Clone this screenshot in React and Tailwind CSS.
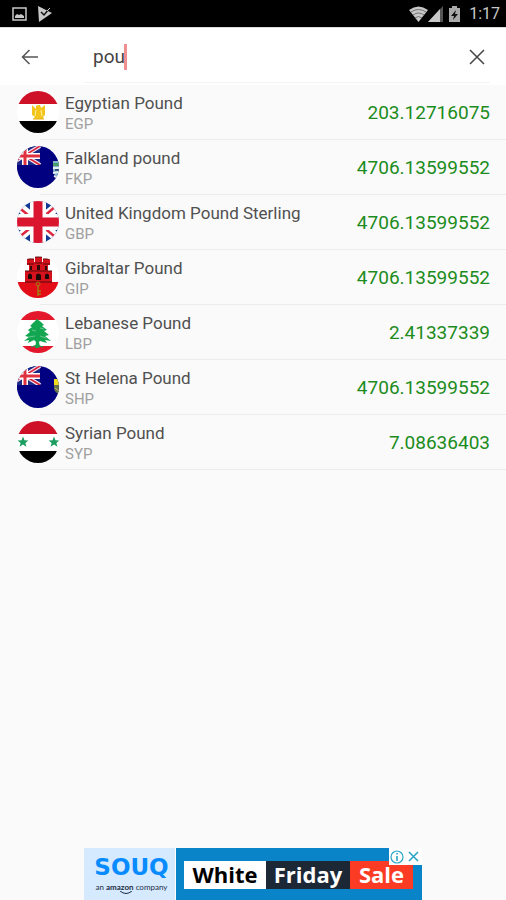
import React, { useState } from 'react';

const UnionCanton = () => (
  <g>
    <rect x="0" y="0" width="23" height="19" fill="#1b2a86" />
    <path d="M-8 0L23 19M23 0L-8 19" stroke="#f2dfe8" strokeWidth="4" />
    <path d="M-8 0L23 19M23 0L-8 19" stroke="#d8203a" strokeWidth="1.5" />
    <path d="M8 0V19M0 10H23" stroke="#fff" strokeWidth="6" />
    <path d="M8 0V19M0 10H23" stroke="#e0303f" strokeWidth="3" />
    <path d="M23 0V24H0V19H23z" fill="#000080" />
  </g>
);

const Star = ({ x }) => (
  <path
    transform={`translate(${x} 21)`}
    d="M0-5.5L1.5-1.8L5.4-1.6L2.4.9L3.4 4.7L0 2.6L-3.4 4.7L-2.4.9L-5.4-1.6L-1.5-1.8Z"
    fill="#1b9e5f"
  />
);

const flags = {
  EGP: (
    <>
      <rect width="42" height="42" fill="#fff" />
      <rect width="42" height="13" fill="#ce1126" />
      <rect y="30" width="42" height="12" fill="#000" />
      <path
        d="M19 15l2-1h2l1 3 4-3v10l-2 2 1 2H16l2-2-3-2V14l4 4z"
        fill="#f3c51c"
      />
      <path d="M19 19l-1 6M24 19l1 6" stroke="#fff0a8" strokeWidth="1" />
      <path d="M16 28h11" stroke="#e5b01a" strokeWidth="1" />
    </>
  ),
  FKP: (
    <>
      <rect width="42" height="42" fill="#000080" />
      <UnionCanton />
      <path d="M36 15h6v17q-6-3-6-8z" fill="#7fb4cf" />
      <path d="M36 17h6v3h-6z" fill="#4d9b68" />
      <path d="M36 22h6M36 27l6-1M37 30l5 2" stroke="#e8eef2" strokeWidth="2" />
      <path d="M38 24h4" stroke="#334f7c" strokeWidth="2" />
    </>
  ),
  GBP: (
    <>
      <rect width="42" height="42" fill="#123a94" />
      <path d="M-6-1L48 43M48-1L-6 43" stroke="#fff" strokeWidth="9" />
      <path d="M-6 0L17 19M48 44L25 25M47-2L25 17M-5 42L17 24" stroke="#dc2740" strokeWidth="2.5" />
      <path d="M21 0V42M0 21H42" stroke="#fff" strokeWidth="16" />
      <path d="M21 0V42M0 21H42" stroke="#d9152f" strokeWidth="9" />
    </>
  ),
  GIP: (
    <>
      <rect width="42" height="42" fill="#fff" />
      <rect y="26" width="42" height="16" fill="#e30d17" />
      <path
        d="M10 3h7v3h1V1h7v5h1V3h7v6h-2v6h4v12H8V15h4V9h-2z"
        fill="#d5121b"
      />
      <path
        d="M10 3h7M18 1h7M26 3h7M10 8h7M18 7h7M26 8h7M8 15h27M8 26h27"
        stroke="#5a080b"
        strokeWidth="1"
      />
      <path d="M11 23v-4q2-3 4 0v4zM19 24v-5q2-3 5 0v5zM28 23v-4q2-3 4 0v4z" fill="#1f0808" />
      <path d="M13 10h2v4h-2zM20 9h3v5h-3zM28 10h2v4h-2z" fill="#31090b" />
      <path d="M21 29v11M21 35h3M21 38h3" stroke="#a57a15" strokeWidth="1.5" fill="none" />
      <circle cx="21" cy="28" r="2" fill="none" stroke="#a57a15" />
    </>
  ),
  LBP: (
    <>
      <rect width="42" height="42" fill="#fff" />
      <rect width="42" height="9" fill="#e4182c" />
      <rect y="35" width="42" height="7" fill="#e4182c" />
      <path
        d="M20 8l4 3 3 3-2 1 5 4-3 1 5 4-4 1 6 5-6-1 2 3-7-2-1 1 1 5-2 1h-3l1-6-2-2-6 3 1-3-5 1 5-4-4-1 5-4-2-2 4-3-2-1 4-4z"
        fill="#12a650"
      />
      <path d="M15 19l4 1M23 17l4 1M12 26l6-1M23 25l6 2" stroke="#65c68c" strokeWidth="1" />
      <path d="M14 36l6-2 6 2" stroke="#12a650" strokeWidth="1" fill="none" />
    </>
  ),
  SHP: (
    <>
      <rect width="42" height="42" fill="#000080" />
      <UnionCanton />
      <path d="M37 13h5v6h-5z" fill="#f2dc20" />
      <path d="M37 19h5v9q-5-2-5-6z" fill="#66724a" />
      <path d="M38 22l4 3" stroke="#d0c66d" strokeWidth="1" />
    </>
  ),
  SYP: (
    <>
      <rect width="42" height="42" fill="#fff" />
      <rect width="42" height="13" fill="#ce1126" />
      <rect y="30" width="42" height="12" fill="#000" />
      <Star x="6" />
      <Star x="37" />
    </>
  ),
};

const currencies = [
  { code: 'EGP', name: 'Egyptian Pound', value: '203.12716075' },
  { code: 'FKP', name: 'Falkland pound', value: '4706.13599552' },
  { code: 'GBP', name: 'United Kingdom Pound Sterling', value: '4706.13599552' },
  { code: 'GIP', name: 'Gibraltar Pound', value: '4706.13599552' },
  { code: 'LBP', name: 'Lebanese Pound', value: '2.41337339' },
  { code: 'SHP', name: 'St Helena Pound', value: '4706.13599552' },
  { code: 'SYP', name: 'Syrian Pound', value: '7.08636403' },
];

const StatusBar = () => (
  <div className="flex h-[27px] shrink-0 items-center justify-between bg-black pl-3 pr-1.5 text-[#c8c8c8]">
    <div className="flex items-center gap-2.5">
      <svg width="15" height="14" viewBox="0 0 15 14" aria-hidden="true">
        <rect x="1" y="1" width="13" height="12" fill="none" stroke="currentColor" strokeWidth="1.5" />
        <path d="M3 11V9l2-2 2 1 2-1 3 2v2z" fill="currentColor" />
      </svg>
      <svg width="16" height="16" viewBox="0 0 16 16" aria-hidden="true">
        <path d="M1 0L15 7L2 16z" fill="currentColor" />
        <path d="M4 6l3 3 5-6" fill="none" stroke="#111" strokeWidth="1.5" />
        <path d="M10 5l3-3" stroke="currentColor" strokeWidth="1" />
      </svg>
    </div>
    <div className="flex items-center gap-1">
      <div className="flex items-center">
        <svg width="19" height="16" viewBox="0 0 19 16" aria-hidden="true">
          <path d="M0 4Q9.500-3 19 4L9.500 16z" fill="currentColor" />
          <path d="M2 6q7.500-5 15 0M4 9q5.500-4 11 0M6 12q3.500-3 7 0" fill="none" stroke="#555" strokeWidth="0.8" />
        </svg>
        <svg width="16" height="16" viewBox="0 0 16 16" aria-hidden="true">
          <path d="M15 0v16H0z" fill="#555" />
          <path d="M12 3v13H0z" fill="currentColor" />
        </svg>
      </div>
      <svg width="13" height="16" viewBox="0 0 13 16" className="mr-1" aria-hidden="true">
        <path d="M4 0h5v2h3v14H1V2h3z" fill="#aaa" />
        <path d="M8 4L3 10h3l-1 4 5-6H7z" fill="#111" />
      </svg>
      <span className="text-base leading-5">1:17</span>
    </div>
  </div>
);

const SearchBar = ({ query, onChange }) => (
  <header className="flex h-[58px] shrink-0 items-center border-t border-[#ddd] bg-white pl-5 pr-4">
    <button type="button" aria-label="Back" className="flex h-8 w-5 items-center justify-center">
      <svg width="18" height="16" viewBox="0 0 18 16" fill="none" stroke="#555" strokeWidth="1.500" aria-hidden="true">
        <path d="M17 8H1.500M8.500 1L1.500 8l7 7" />
      </svg>
    </button>
    <div className="ml-11 flex h-full flex-1 items-end pb-0.5">
      <label className="flex h-full flex-1 items-center border-b border-[#f3f3f3] pt-1 pl-[9px]">
        <input
          type="text"
          aria-label="Search currency"
          value={query}
          onChange={(e) => onChange(e.target.value)}
          className="field-sizing-content bg-transparent text-[19px] leading-6 text-[#444] outline-none"
        />
        <span className="-ml-px h-[26px] w-[3px] bg-[#ef8f8f]" />
      </label>
      <div className="flex h-full items-center border-b border-[#f3f3f3] pt-1">
        <button
          type="button"
          aria-label="Clear"
          onClick={() => onChange('')}
          className="flex h-8 w-[26px] items-center justify-center"
        >
          <svg width="16" height="16" viewBox="0 0 16 16" stroke="#444" strokeWidth="1.500" aria-hidden="true">
            <path d="M1 1l14 14M15 1L1 15" />
          </svg>
        </button>
      </div>
    </div>
  </header>
);

const CurrencyRow = ({ currency }) => (
  <li className="h-[55px] pl-10">
    <div className="flex h-full items-center border-b border-[#ececec] pr-4">
      <svg width="42" height="42" viewBox="0 0 42 42" className="-ml-[23px] shrink-0 rounded-full" aria-hidden="true">
        {flags[currency.code]}
      </svg>
      <div className="flex-1 pt-0.5 pl-1.5">
        <div className="text-[17px] leading-[22px] text-[#505050]">{currency.name}</div>
        <div className="text-[15px] leading-5 text-[#a0a0a0]">{currency.code}</div>
      </div>
      <div className="pt-0.5 text-[19px] leading-6 text-[#1c8c1c]">{currency.value}</div>
    </div>
  </li>
);

const AdBanner = () => (
  <a href="#sale" className="relative mx-auto flex h-[52px] w-[338px] shrink-0 bg-[#0a84c9]">
    <div className="flex w-[92px] flex-col items-center border-r border-white bg-[#d5eaff] pt-1 pl-1">
      <div className="font-['DejaVu_Sans'] text-[23px] leading-[30px] font-bold text-[#078bff]">SOUQ</div>
      <div className="font-[Lato] text-[8px] leading-[10px] whitespace-nowrap text-[#1c2c45]">
        an <b>amazon</b> company
      </div>
      <svg width="14" height="4" viewBox="0 0 14 4" className="-mt-px mr-3" aria-hidden="true">
        <path d="M1 0q6 5 12 0" fill="none" stroke="#1c2c45" />
      </svg>
    </div>
    <div className="mt-[13px] ml-2 flex h-7 font-['Open_Sans'] text-[22px] leading-[26px] font-bold text-white">
      <span className="w-[82px] bg-white text-center text-black">White</span>
      <span className="w-[84px] bg-[#1c2836] text-center">Friday</span>
      <span className="w-[63px] bg-[#fb3b24] text-center">Sale</span>
    </div>
    <svg width="33" height="17" viewBox="0 0 33 17" className="absolute top-0 right-0 bg-white" aria-hidden="true">
      <g fill="none" stroke="#2aa4c5" strokeWidth="1.200">
        <circle cx="8" cy="9" r="6" />
        <path d="M8 8v5M8 5v1.500M20 4l9 9M29 4l-9 9" strokeWidth="1.600" />
      </g>
    </svg>
  </a>
);

const App = () => {
  const [query, setQuery] = useState('pou');
  const results = currencies.filter((c) => c.name.toLowerCase().includes(query.toLowerCase()));

  return (
    <div className="flex min-h-screen flex-col bg-[#fafafa] font-[Roboto,sans-serif]">
      <StatusBar />
      <SearchBar query={query} onChange={setQuery} />
      <ul className="flex-1">
        {results.map((currency) => (
          <CurrencyRow key={currency.code} currency={currency} />
        ))}
      </ul>
      <AdBanner />
    </div>
  );
};

export default App;
